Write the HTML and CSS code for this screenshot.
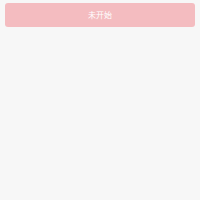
FILE: index.html
```html
<!DOCTYPE html>
<html lang="zh">
<head>
    <meta charset="UTF-8">
    <meta name="viewport" content="width=device-width, initial-scale=1.0">
    <title>状态</title>
    <link rel="stylesheet" href="styles.css">
</head>
<body>
    <div class="page">
        <button class="status-button" disabled>未开始</button>
    </div>
</body>
</html>
```

FILE: styles.css
```css
html, body {
    margin: 0;
    padding: 0;
    height: 100%;
    background-color: #f7f7f7;
}

body {
    font-family: "Noto Sans CJK SC", "Noto Sans", sans-serif;
}

.page {
    padding: 3px 5px;
}

.status-button {
    display: block;
    width: 100%;
    height: 24px;
    padding: 0;
    border: none;
    border-radius: 3px;
    background-color: #f4bcc0;
    color: #ffffff;
    font-family: inherit;
    font-size: 8px;
    line-height: 24px;
    text-align: center;
}
```
